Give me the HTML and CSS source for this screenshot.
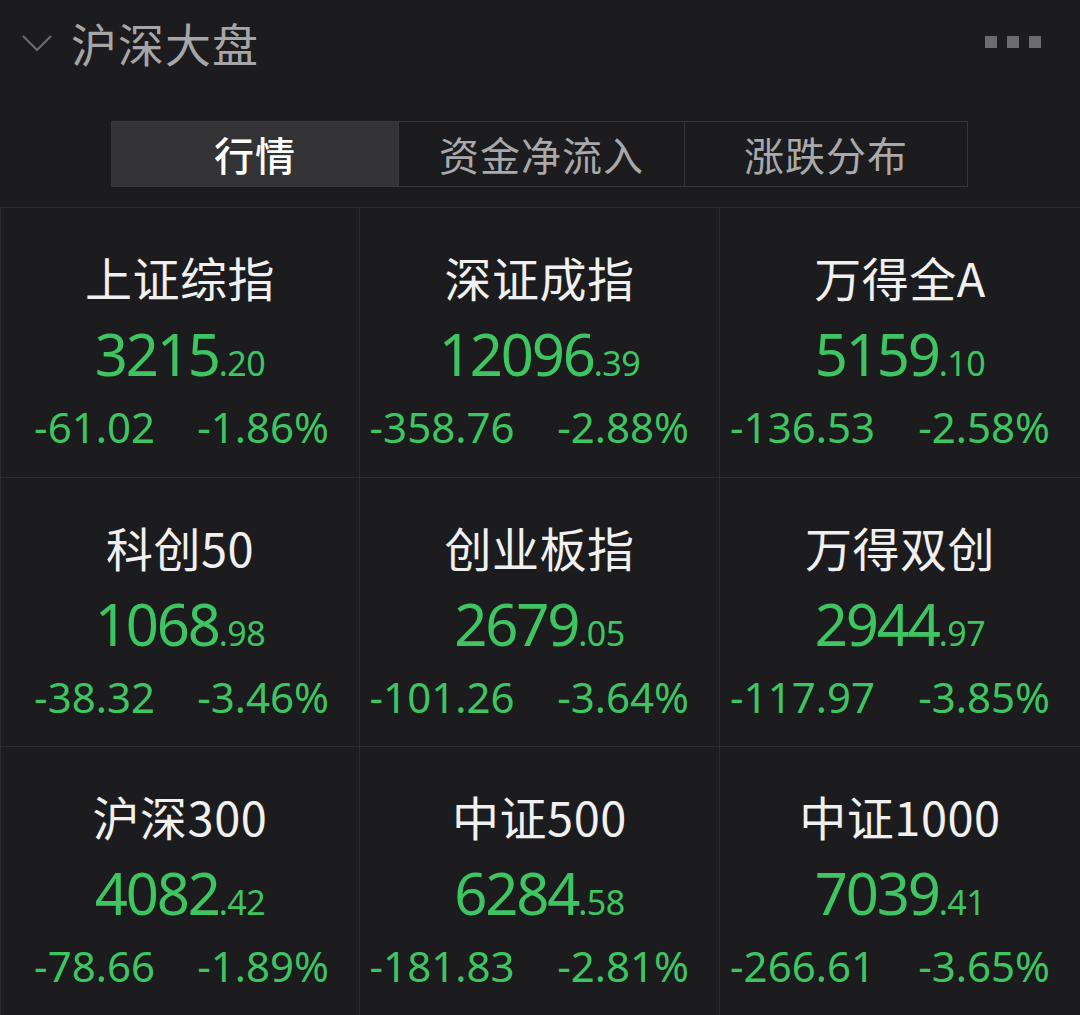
FILE: index.html
```html
<!DOCTYPE html>
<html lang="zh-CN">
<head>
<meta charset="utf-8">
<title>沪深大盘</title>
<link rel="stylesheet" href="styles.css">
</head>
<body>
<div class="page">
  <header class="header">
    <div class="header-left">
      <svg class="chevron" width="32" height="20" viewBox="0 0 32 20"><polyline points="2,3 16,17 30,3" fill="none" stroke="#6a6a6c" stroke-width="2.2"/></svg>
      <h1 class="title">沪深大盘</h1>
    </div>
    <div class="dots"><span></span><span></span><span></span></div>
  </header>

  <nav class="tabs">
    <div class="tab active">行情</div>
    <div class="tab">资金净流入</div>
    <div class="tab">涨跌分布</div>
  </nav>

  <section class="grid">
    <div class="cell">
      <div class="name">上证综指</div>
      <div class="price">3215<span class="dec">.20</span></div>
      <div class="change"><span>-61.02</span><span>-1.86%</span></div>
    </div>
    <div class="cell">
      <div class="name">深证成指</div>
      <div class="price">12096<span class="dec">.39</span></div>
      <div class="change"><span>-358.76</span><span>-2.88%</span></div>
    </div>
    <div class="cell">
      <div class="name">万得全A</div>
      <div class="price">5159<span class="dec">.10</span></div>
      <div class="change"><span>-136.53</span><span>-2.58%</span></div>
    </div>
    <div class="cell">
      <div class="name">科创50</div>
      <div class="price">1068<span class="dec">.98</span></div>
      <div class="change"><span>-38.32</span><span>-3.46%</span></div>
    </div>
    <div class="cell">
      <div class="name">创业板指</div>
      <div class="price">2679<span class="dec">.05</span></div>
      <div class="change"><span>-101.26</span><span>-3.64%</span></div>
    </div>
    <div class="cell">
      <div class="name">万得双创</div>
      <div class="price">2944<span class="dec">.97</span></div>
      <div class="change"><span>-117.97</span><span>-3.85%</span></div>
    </div>
    <div class="cell">
      <div class="name">沪深300</div>
      <div class="price">4082<span class="dec">.42</span></div>
      <div class="change"><span>-78.66</span><span>-1.89%</span></div>
    </div>
    <div class="cell">
      <div class="name">中证500</div>
      <div class="price">6284<span class="dec">.58</span></div>
      <div class="change"><span>-181.83</span><span>-2.81%</span></div>
    </div>
    <div class="cell">
      <div class="name">中证1000</div>
      <div class="price">7039<span class="dec">.41</span></div>
      <div class="change"><span>-266.61</span><span>-3.65%</span></div>
    </div>
  </section>
</div>
</body>
</html>
```

FILE: styles.css
```css
* { box-sizing: border-box; }
html, body {
  margin: 0;
  padding: 0;
  background: #1c1c1e;
}
body {
  width: 1080px;
  height: 1015px;
  overflow: hidden;
  font-family: "Noto Sans CJK SC", "Noto Sans", sans-serif;
}
.page {
  display: flex;
  flex-direction: column;
}
.header {
  height: 90px;
  display: flex;
  align-items: center;
  justify-content: space-between;
  padding: 0 39px 6px 21px;
}
.header-left {
  display: flex;
  align-items: center;
  gap: 18px;
}
.chevron { display: block; margin-top: 2px; }
.title {
  margin: 0;
  font-size: 46px;
  line-height: 56px;
  font-weight: 400;
  color: #a6a6a8;
  letter-spacing: 1px;
}
.dots {
  display: flex;
  gap: 10px;
}
.dots span {
  width: 12px;
  height: 12px;
  background: #6c6c6e;
}
.tabs {
  margin: 31px 0 0 111px;
  width: 857px;
  height: 66px;
  display: grid;
  grid-template-columns: 286px 286px 1fr;
  border: 1px solid #38383a;
}
.tab {
  display: flex;
  align-items: center;
  justify-content: center;
  font-size: 40px;
  color: #a9a9ab;
  border-left: 1px solid #38383a;
  letter-spacing: 1px;
}
.tab:first-child { border-left: none; }
.tab.active {
  background: #333336;
  color: #ffffff;
  font-weight: 500;
}
.grid {
  margin-top: 20px;
  display: grid;
  grid-template-columns: 360px 360px 360px;
  grid-template-rows: 270px 269px 269px;
  border-top: 1px solid #2c2c2e;
}
.cell {
  border-right: 1px solid #2c2c2e;
  border-bottom: 1px solid #2c2c2e;
  display: flex;
  flex-direction: column;
  align-items: center;
  padding-top: 41px;
  min-width: 0;
}
.cell:nth-child(3n+1) { border-left: 1px solid #2c2c2e; }
.cell:nth-child(3n) { border-right: none; }
.name {
  font-size: 47px;
  line-height: 56px;
  color: #f0f0f0;
  letter-spacing: 0.5px;
}
.price {
  margin-top: 17px;
  font-family: "Noto Sans", sans-serif;
  font-size: 58px;
  line-height: 64px;
  color: #3ec562;
  letter-spacing: -2.2px;
}
.price .dec {
  font-size: 34px;
  letter-spacing: -0.5px;
}
.change {
  margin-top: 7px;
  width: 100%;
  padding: 0 30px;
  display: grid;
  grid-template-columns: minmax(0, 1fr) minmax(0, 1fr);
  column-gap: 50px;
  font-family: "Noto Sans", sans-serif;
  font-size: 42px;
  line-height: 50px;
  color: #3ec562;
  white-space: nowrap;
}
.change span {
  display: flex;
  justify-content: flex-end;
}
```
